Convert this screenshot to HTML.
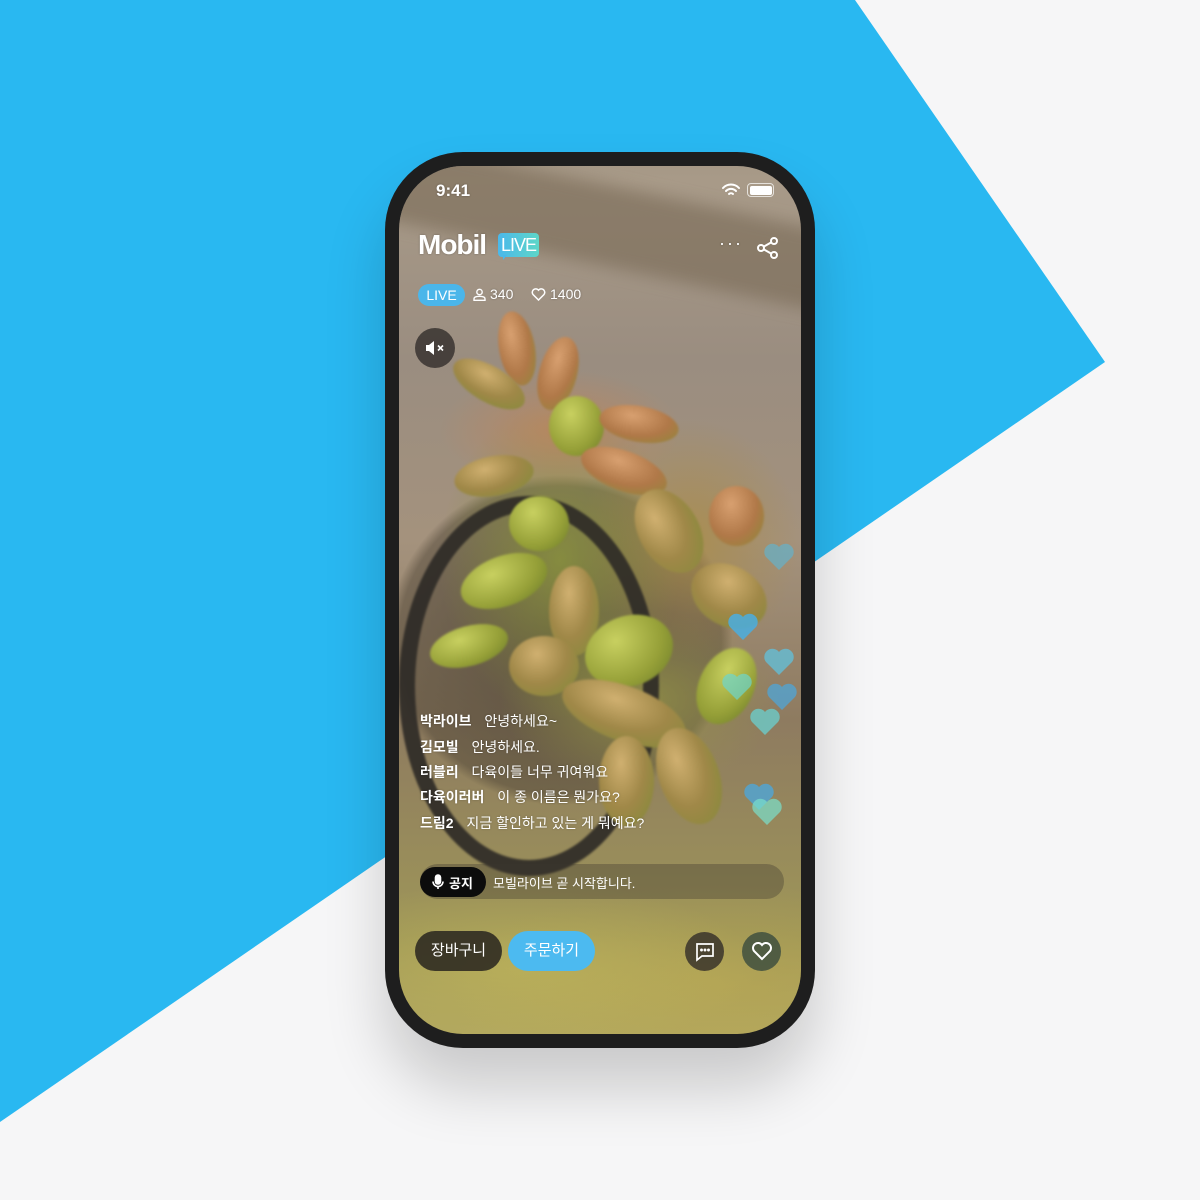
<!DOCTYPE html>
<html><head><meta charset="utf-8">
<style>
*{margin:0;padding:0;box-sizing:border-box}
body{width:1200px;height:1200px;overflow:hidden;background:#f6f6f7;position:relative;font-family:"Liberation Sans","Noto Sans CJK KR",sans-serif}
.bg{position:absolute;left:0;top:0}
.phone{position:absolute;left:385px;top:152px;width:430px;height:896px;border-radius:78px;background:#1e1e1e;box-shadow:0 40px 60px rgba(0,0,0,.18)}
.screen{position:absolute;left:399px;top:166px;width:402px;height:868px;border-radius:64px;overflow:hidden;
background:
radial-gradient(ellipse 120px 60px at 560px 430px,rgba(200,130,80,.6),transparent),
radial-gradient(ellipse 150px 200px at 560px 560px,rgba(140,150,60,.8),transparent 80%),
radial-gradient(ellipse 110px 120px at 690px 540px,rgba(170,140,70,.8),transparent),
radial-gradient(ellipse 140px 90px at 640px 700px,rgba(150,150,70,.8),transparent),
radial-gradient(ellipse 230px 220px at 560px 640px,rgba(80,70,55,.8),rgba(80,70,55,.5) 70%,transparent 75%),
linear-gradient(180deg,#8d8473 0%,#a89a88 15%,#9a8d80 30%,#a4927d 45%,#8e7b60 60%,#9e9658 78%,#b5aa60 88%,#a09050 100%);
background-attachment:fixed}
.abs{position:absolute}
.leaf{position:absolute;border-radius:50%;background:radial-gradient(ellipse at 40% 30%,#d0b070,#a08848 50%,#808a38);filter:blur(1px)}
.g{background:radial-gradient(ellipse at 40% 30%,#c8d060,#96a038 60%,#6a7a28)}
.o{background:radial-gradient(ellipse at 40% 30%,#d8a070,#b07848 55%,#8a8a38)}
.t{color:#fff;text-shadow:0 0 2px rgba(0,0,0,.3)}
.chat{position:absolute;left:420px;font-size:14px;color:#fff;text-shadow:0 0 2px rgba(0,0,0,.25)}
.chat b{font-weight:bold;margin-right:9px}
</style></head><body>
<svg class="bg" width="1200" height="1200"><polygon points="0,0 855,0 1105,362 0,1122" fill="#29b8f1"/></svg>
<div class="phone"></div>
<div class="screen"></div>
<div class="abs" style="left:399px;top:166px;width:402px;height:868px;border-radius:64px;overflow:hidden">
 <div class="abs" style="left:-20px;top:20px;width:460px;height:80px;transform:rotate(12deg);background:rgba(120,105,85,.6);filter:blur(8px)"></div>
 <div class="abs" style="left:0;top:330px;width:260px;height:380px;border-radius:50%;border:16px solid #2d2a26;filter:blur(1px);opacity:.9"></div>
 <div class="leaf o" style="left:100px;top:145px;width:36px;height:75px;transform:rotate(-10deg)"></div>
 <div class="leaf" style="left:50px;top:200px;width:80px;height:36px;transform:rotate(30deg)"></div>
 <div class="leaf o" style="left:140px;top:170px;width:38px;height:75px;transform:rotate(15deg)"></div>
 <div class="leaf g" style="left:150px;top:230px;width:55px;height:60px"></div>
 <div class="leaf o" style="left:200px;top:240px;width:80px;height:36px;transform:rotate(10deg)"></div>
 <div class="leaf" style="left:55px;top:290px;width:80px;height:40px;transform:rotate(-10deg)"></div>
 <div class="leaf o" style="left:180px;top:285px;width:90px;height:40px;transform:rotate(20deg)"></div>
 <div class="leaf g" style="left:110px;top:330px;width:60px;height:55px"></div>
 <div class="leaf" style="left:240px;top:320px;width:60px;height:90px;transform:rotate(-30deg)"></div>
 <div class="leaf o" style="left:310px;top:320px;width:55px;height:60px"></div>
 <div class="leaf g" style="left:60px;top:390px;width:90px;height:50px;transform:rotate(-20deg)"></div>
 <div class="leaf" style="left:150px;top:400px;width:50px;height:90px"></div>
 <div class="leaf g" style="left:30px;top:460px;width:80px;height:40px;transform:rotate(-15deg)"></div>
 <div class="leaf" style="left:110px;top:470px;width:70px;height:60px"></div>
 <div class="leaf g" style="left:185px;top:450px;width:90px;height:70px;transform:rotate(-20deg)"></div>
 <div class="leaf" style="left:290px;top:400px;width:80px;height:60px;transform:rotate(30deg)"></div>
 <div class="leaf" style="left:160px;top:520px;width:130px;height:55px;transform:rotate(20deg)"></div>
 <div class="leaf" style="left:260px;top:560px;width:60px;height:100px;transform:rotate(-20deg)"></div>
 <div class="leaf g" style="left:300px;top:480px;width:55px;height:80px;transform:rotate(25deg)"></div>
 <div class="leaf" style="left:200px;top:570px;width:55px;height:90px"></div>
 <div class="abs" style="left:0;top:700px;width:402px;height:168px;background:radial-gradient(ellipse at 30% 60%,rgba(200,190,90,.5),transparent 60%),radial-gradient(ellipse at 80% 70%,rgba(190,170,80,.5),transparent 60%)"></div>
</div>

<div class="abs t" style="left:436px;top:181px;font-size:17px;font-weight:bold">9:41</div>
<svg class="abs" style="left:721px;top:183px" width="20" height="14" viewBox="0 0 20 14"><path d="M2 5a11 11 0 0 1 16 0M5 8a7 7 0 0 1 10 0M8 11a3 3 0 0 1 4 0" stroke="#fff" stroke-width="2" fill="none" stroke-linecap="round"/></svg>
<div class="abs" style="left:747px;top:183px;width:27px;height:14px;border:1.5px solid rgba(255,255,255,.7);border-radius:4px;padding:1.5px"><div style="width:100%;height:100%;background:#fff;border-radius:2px"></div></div>

<div class="abs t" style="left:418px;top:229px;font-size:28px;font-weight:bold;letter-spacing:-1px">Mobil</div>
<div class="abs" style="left:498px;top:233px;width:41px;height:24px;border-radius:4px;background:linear-gradient(90deg,#4bb8ea,#5ed6c8);color:#fff;font-size:18px;line-height:24px;text-align:center;letter-spacing:-1px">LIVE</div>
<div class="abs" style="left:503px;top:255px;width:0;height:0;border-left:4px solid #4bb8ea;border-right:4px solid transparent;border-bottom:5px solid transparent"></div>
<div class="abs t" style="left:719px;top:233px;font-size:18px;letter-spacing:2px">···</div>
<svg class="abs" style="left:756px;top:236px" width="24" height="24" viewBox="0 0 24 24" fill="none" stroke="#fff" stroke-width="2"><circle cx="18" cy="5" r="3"/><circle cx="5" cy="12" r="3"/><circle cx="18" cy="19" r="3"/><path d="M8 10.5l7-4M8 13.5l7 4"/></svg>

<div class="abs" style="left:418px;top:284px;width:47px;height:22px;border-radius:11px;background:#4bb6ea;color:#fff;font-size:14px;line-height:22px;text-align:center">LIVE</div>
<svg class="abs" style="left:473px;top:288px" width="13" height="13" viewBox="0 0 13 13" fill="none" stroke="#fff" stroke-width="1.4"><circle cx="6.5" cy="4" r="2.7"/><path d="M1 12.3v-1.5c0-1.5 1.5-2.5 5.5-2.5s5.5 1 5.5 2.5v1.5z"/></svg>
<div class="abs t" style="left:490px;top:286px;font-size:14px">340</div>
<svg class="abs" style="left:531px;top:288px" width="15" height="13" viewBox="0 0 15 13" fill="none" stroke="#fff" stroke-width="1.5"><path d="M7.5 12L2 6.5A3.2 3.2 0 0 1 7.5 2.2A3.2 3.2 0 0 1 13 6.5z"/></svg>
<div class="abs t" style="left:550px;top:286px;font-size:14px">1400</div>

<div class="abs" style="left:415px;top:328px;width:40px;height:40px;border-radius:50%;background:rgba(50,45,42,.8)"></div>
<svg class="abs" style="left:424px;top:339px" width="24" height="18" viewBox="0 0 24 18"><path d="M2 6h3l5-4v14l-5-4H2z" fill="#fff"/><path d="M14 6.5l5 5M19 6.5l-5 5" stroke="#fff" stroke-width="1.6"/></svg>

<div class="chat" style="top:711px"><b>박라이브</b> 안녕하세요~</div>
<div class="chat" style="top:737px"><b>김모빌</b> 안녕하세요.</div>
<div class="chat" style="top:762px"><b>러블리</b> 다육이들 너무 귀여워요</div>
<div class="chat" style="top:787px"><b>다육이러버</b> 이 종 이름은 뭔가요?</div>
<div class="chat" style="top:813px"><b>드림2</b> 지금 할인하고 있는 게 뭐예요?</div>

<div class="abs" style="left:420px;top:864px;width:364px;height:35px;border-radius:18px;background:rgba(60,55,45,.35)"></div>
<div class="abs" style="left:420px;top:867px;width:66px;height:30px;border-radius:15px;background:#0c0c0c"></div>
<svg class="abs" style="left:432px;top:874px" width="12" height="16" viewBox="0 0 12 16" fill="none" stroke="#fff" stroke-width="1.6"><rect x="3.5" y="1" width="5" height="9" rx="2.5" fill="#fff"/><path d="M1 7.5a5 5 0 0 0 10 0M6 12.5V15"/></svg>
<div class="abs" style="left:449px;top:873px;font-size:13px;color:#fff;font-weight:bold">공지</div>
<div class="abs" style="left:493px;top:873px;font-size:13px;color:#fff">모빌라이브 곧 시작합니다.</div>

<div class="abs" style="left:415px;top:931px;width:87px;height:40px;border-radius:20px;background:rgba(40,36,30,.85);color:#fff;font-size:15px;line-height:40px;text-align:center">장바구니</div>
<div class="abs" style="left:508px;top:931px;width:87px;height:40px;border-radius:20px;background:#4cbaf0;color:#fff;font-size:15px;line-height:40px;text-align:center">주문하기</div>
<div class="abs" style="left:685px;top:932px;width:39px;height:39px;border-radius:50%;background:rgba(50,45,40,.8)"></div>
<svg class="abs" style="left:695px;top:942px" width="20" height="20" viewBox="0 0 20 20" fill="none" stroke="#fff" stroke-width="1.7"><path d="M2 2h16v12H7l-5 4z"/><circle cx="6.5" cy="8" r=".6" fill="#fff"/><circle cx="10" cy="8" r=".6" fill="#fff"/><circle cx="13.5" cy="8" r=".6" fill="#fff"/></svg>
<div class="abs" style="left:742px;top:932px;width:39px;height:39px;border-radius:50%;background:rgba(50,70,60,.75)"></div>
<svg class="abs" style="left:751px;top:941px" width="22" height="20" viewBox="0 0 22 20" fill="none" stroke="#fff" stroke-width="2"><path d="M11 18L3 10A4.6 4.6 0 0 1 11 4a4.6 4.6 0 0 1 8 6z"/></svg>

<svg class="abs" style="left:720px;top:540px" width="90" height="300" viewBox="0 0 90 300">
<defs><path id="h" d="M17 30L4 17A7.5 7.5 0 0 1 17 7a7.5 7.5 0 0 1 13 10z"/></defs>
<use href="#h" x="42" y="0" fill="#5ab8d8" opacity=".6"/>
<use href="#h" x="6" y="70" fill="#4aaee0" opacity=".85"/>
<use href="#h" x="42" y="105" fill="#5cc6e6" opacity=".7"/>
<use href="#h" x="0" y="130" fill="#6cd6cc" opacity=".7"/>
<use href="#h" x="45" y="140" fill="#4aa8e0" opacity=".7"/>
<use href="#h" x="28" y="165" fill="#6ad0d0" opacity=".75"/>
<use href="#h" x="22" y="240" fill="#4aa8e0" opacity=".75"/>
<use href="#h" x="30" y="255" fill="#7ae0cc" opacity=".7"/>
</svg>
</body></html>
